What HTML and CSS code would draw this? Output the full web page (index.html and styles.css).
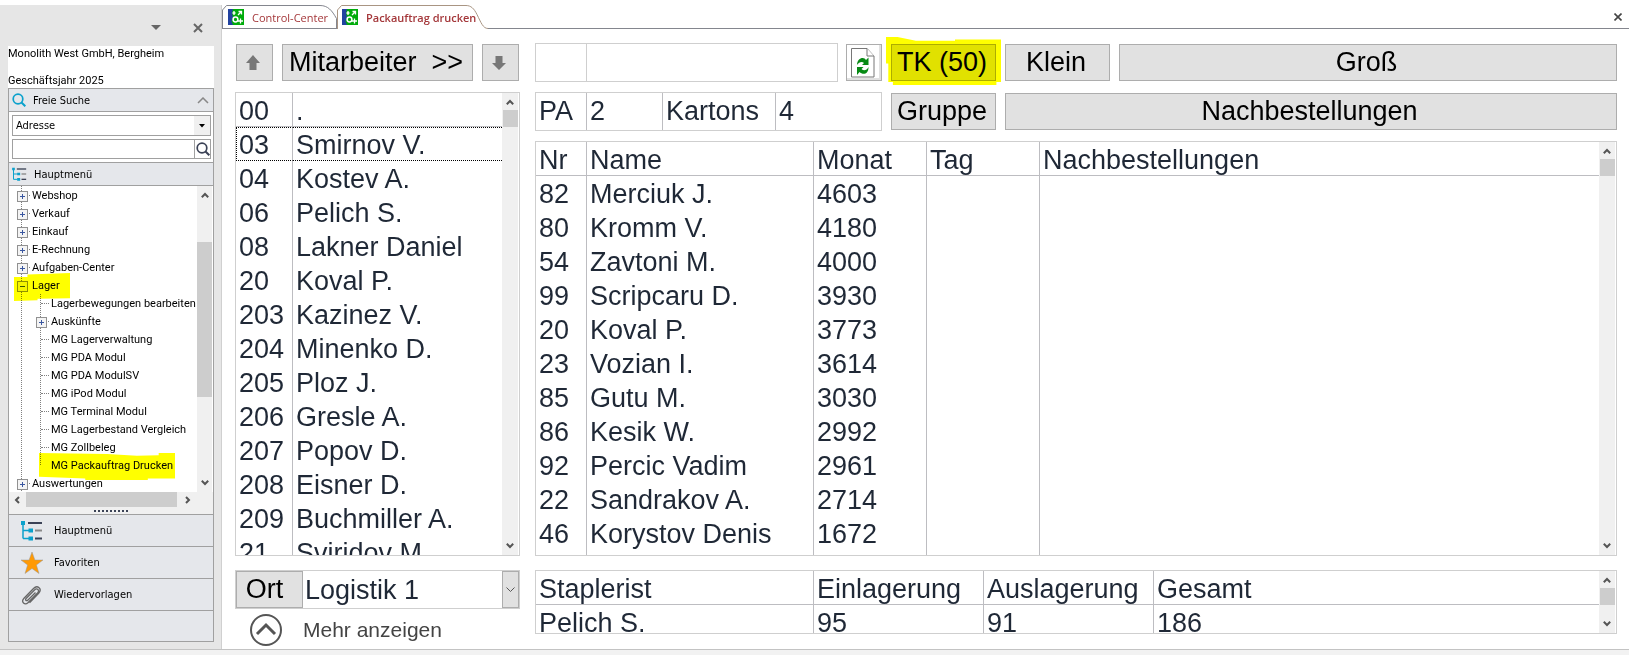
FILE: index.html
```
<!DOCTYPE html>
<html lang="de">
  <head>
    <meta charset="UTF-8" />
    <meta name="viewport" content="width=device-width, initial-scale=1.0" />
    <title>Packauftrag drucken</title>
    <link rel="stylesheet" href="styles.css">
  </head>
  <body>
    <!-- shared icons -->
    <svg class="sprite" width="0" height="0" aria-hidden="true">
      <symbol id="up" viewBox="0 0 8 6"><path d="M0.8 5.2L4 2l3.200 3.200" fill="none" stroke="#555" stroke-width="2" /></symbol>
      <symbol id="down" viewBox="0 0 8 6"><path d="M0.8 0.8L4 4l3.200-3.200" fill="none" stroke="#555" stroke-width="2" /></symbol>
      <symbol id="lens" viewBox="0 0 14 14"><circle cx="6" cy="6" r="4.800" fill="none" stroke="currentColor" stroke-width="1.700" /><path d="M9.500 9.500L13.300 13.300" stroke="currentColor" stroke-width="2" /></symbol>
      <symbol id="treeicon" viewBox="0 0 22 21">
        <path d="M2 3v15.500M2 10.500h6M2 18.500h6" fill="none" stroke="#0ba1cc" stroke-width="1.500" />
        <path d="M0 1h4v4H0zM7.500 8.500h4.500v4H7.500zM7.500 16.500h4.500v4H7.500z" fill="#0ba1cc" />
        <path d="M7 3h14" stroke="#3b4256" stroke-width="2" />
        <path d="M14 10.500h7" stroke="#888" stroke-width="2" />
        <path d="M14 18.500h7" stroke="#3b4256" stroke-width="2" />
      </symbol>
      <symbol id="app" viewBox="0 0 16 16">
        <path d="M0 0h16v16H0z" fill="#00ab0b" />
        <path d="M0 0h5l-1 4 1 4-1.500 4L5 16H0z" fill="#2142a0" />
        <circle cx="7.500" cy="10.500" r="2.400" fill="none" stroke="#fff" stroke-width="1.500" />
        <path d="M6 2v4M4.500 4h3M12.500 9.500v5M10 12h5M10 6l3-3M10.500 2.500h3v3" fill="none" stroke="#fff" stroke-width="1.300" />
      </symbol>
    </svg>

    <div class="app">
      <aside class="sidebar">
        <div class="dock-bar">
          <button class="plain" aria-label="Optionen"><svg width="10" height="5"><path d="M0 0h10L5 5z" fill="#666" /></svg></button>
          <button class="plain" aria-label="Schließen"><svg width="10" height="10"><path d="M1 1l8 8M9 1l-8 8" stroke="#666" stroke-width="2" /></svg></button>
        </div>
        <div class="company">
          <p>Monolith West GmbH, Bergheim</p>
          <p>Geschäftsjahr 2025</p>
        </div>

        <div class="panel">
          <h2 class="panel-title">
            <svg class="cyan" width="14" height="14"><use href="#lens" /></svg>
            <span>Freie Suche</span>
            <svg class="fold" width="12" height="7"><path d="M1 6l5-5 5 5" fill="none" stroke="#888" stroke-width="1.500" /></svg>
          </h2>
          <div class="search">
            <div class="search-type">
              <select aria-label="Suchbereich"><option>Adresse</option></select>
              <span class="search-arrow"><svg width="6" height="4"><path d="M0 0h6L3 3.500z" /></svg></span>
            </div>
            <div class="search-term">
              <input type="text" aria-label="Suchbegriff" />
              <button class="plain" aria-label="Suchen"><svg width="14" height="14"><use href="#lens" /></svg></button>
            </div>
          </div>
          <h2 class="panel-title menu-title">
            <svg width="15" height="14"><use href="#treeicon" /></svg>
            <span>Hauptmenü</span>
          </h2>

          <div class="tree-area">
            <ul class="tree">
              <li><a href="#" class="node">Webshop</a></li>
              <li><a href="#" class="node">Verkauf</a></li>
              <li><a href="#" class="node">Einkauf</a></li>
              <li><a href="#" class="node">E-Rechnung</a></li>
              <li><a href="#" class="node">Aufgaben-Center</a></li>
              <li><a href="#" class="node open mark mark-lager">Lager</a>
                <ul>
                  <li><a href="#">Lagerbewegungen bearbeiten</a></li>
                  <li><a href="#" class="node">Auskünfte</a></li>
                  <li><a href="#">MG Lagerverwaltung</a></li>
                  <li><a href="#">MG PDA Modul</a></li>
                  <li><a href="#">MG PDA ModulSV</a></li>
                  <li><a href="#">MG iPod Modul</a></li>
                  <li><a href="#">MG Terminal Modul</a></li>
                  <li><a href="#">MG Lagerbestand Vergleich</a></li>
                  <li><a href="#">MG Zollbeleg</a></li>
                  <li><a href="#" class="mark mark-druck">MG Packauftrag Drucken</a></li>
                </ul>
              </li>
              <li><a href="#" class="node">Auswertungen</a></li>
            </ul>
            <div class="scroll tree-scroll">
              <svg width="8" height="6"><use href="#up" /></svg>
              <i class="thumb"></i>
              <svg width="8" height="6"><use href="#down" /></svg>
            </div>
          </div>
          <div class="hscroll">
            <svg width="6" height="8"><path d="M5 1L2 4l3 3" fill="none" stroke="#555" stroke-width="2" /></svg>
            <i class="hthumb"></i>
            <svg width="6" height="8"><path d="M1 1l3 3-3 3" fill="none" stroke="#555" stroke-width="2" /></svg>
          </div>
          <div class="grip"></div>

          <nav class="shortcuts">
            <a href="#"><svg width="22" height="21"><use href="#treeicon" /></svg>Hauptmenü</a>
            <a href="#"><svg width="22" height="22" viewBox="0 0 22 22"><path d="M11 0l2.900 8H22l-6.600 5 2.600 8.500-7-5-7 5L6.600 13 0 8h8.100z" fill="#ff9a05" stroke="#999" stroke-width="0.500" /></svg>Favoriten</a>
            <a href="#"><svg width="22" height="22" viewBox="0 0 22 22"><path d="M15.500 7.500L8 15c-1.500 1.500-3.300 0-1.900-1.500L14.500 5c2.600-2.500 5.500.3 3 3l-9.300 9.500c-3.500 3.400-7.600-.6-4.200-4.200L13.500 3.500c4-4.200 9 .5 5.200 4.700L9.500 17.800" transform="translate(-1 1)" fill="none" stroke="#666" stroke-width="1.300" /></svg>Wiedervorlagen</a>
          </nav>
        </div>
      </aside>

      <main class="content">
        <div class="tabs">
          <button class="tab tab-center">
            <svg class="tab-shape" width="115" height="24"><path d="M0.500 24V5l4-4.500H98c8 0 12 5 16.500 13V24" fill="#fff" stroke="#84868e" /><path d="M0 23.500h115" stroke="#84868e" /></svg>
            <svg width="16" height="16"><use href="#app" /></svg>
            <span>Control-Center</span>
          </button>
          <button class="tab tab-active">
            <svg class="tab-shape" width="151" height="24"><path d="M0.500 24V5l4-4.500H129c5 0 8 3 11 9 4 8 6 14 11 14" fill="#fff" stroke="#a99583" /></svg>
            <svg width="16" height="16"><use href="#app" /></svg>
            <span>Packauftrag drucken</span>
          </button>
          <div class="tabs-rest">
            <button class="plain" aria-label="Tab schließen"><svg width="8" height="8"><path d="M0.500 0.500l7 7M7.500 0.500l-7 7" stroke="#444" stroke-width="1.600" /></svg></button>
          </div>
        </div>

        <div class="work">
          <section class="staff">
            <div class="toolbar">
              <button class="btn square" aria-label="Nach oben"><svg width="14" height="16"><path d="M7 0l7 8h-3.500v7h-7V8H0z" fill="#777" /></svg></button>
              <button class="btn grow">Mitarbeiter&nbsp; &gt;&gt;</button>
              <button class="btn square" aria-label="Nach unten"><svg width="14" height="16"><path d="M7 15l7-7h-3.500V1h-7v7H0z" fill="#777" /></svg></button>
            </div>
            <div class="box list">
              <div class="clip">
                <table>
                  <colgroup><col class="w-id"><col></colgroup>
                  <thead><tr><th>00</th><th>.</th></tr></thead>
                  <tbody>
                    <tr class="focused"><td>03</td><td>Smirnov V.</td></tr>
                    <tr><td>04</td><td>Kostev A.</td></tr>
                    <tr><td>06</td><td>Pelich S.</td></tr>
                    <tr><td>08</td><td>Lakner Daniel</td></tr>
                    <tr><td>20</td><td>Koval P.</td></tr>
                    <tr><td>203</td><td>Kazinez V.</td></tr>
                    <tr><td>204</td><td>Minenko D.</td></tr>
                    <tr><td>205</td><td>Ploz J.</td></tr>
                    <tr><td>206</td><td>Gresle A.</td></tr>
                    <tr><td>207</td><td>Popov D.</td></tr>
                    <tr><td>208</td><td>Eisner D.</td></tr>
                    <tr><td>209</td><td>Buchmiller A.</td></tr>
                    <tr><td>21</td><td>Sviridov M.</td></tr>
                  </tbody>
                </table>
              </div>
              <div class="scroll">
                <svg width="8" height="6"><use href="#up" /></svg>
                <i class="thumb"></i>
                <svg width="8" height="6"><use href="#down" /></svg>
              </div>
            </div>
            <div class="foot">
              <div class="place">
                <button class="btn ort" id="ort">Ort</button>
                <select aria-labelledby="ort"><option>Logistik 1</option></select>
                <span class="place-arrow"><svg width="9" height="6"><path d="M0.500 0.500l4 4 4-4" fill="none" stroke="#555" /></svg></span>
              </div>
              <button class="more">
                <svg width="34" height="34"><circle cx="17" cy="17" r="15" fill="none" stroke="#555" stroke-width="2" /><path d="M8 21l9-9 9 9" fill="none" stroke="#555" stroke-width="3" /></svg>
                <span>Mehr anzeigen</span>
              </button>
            </div>
          </section>

          <section class="orders">
            <div class="toolbar">
              <div class="toolbar-left">
                <div class="box scan">
                  <input type="text" class="scan-nr" aria-label="Nr" />
                  <input type="text" class="scan-name" aria-label="Name" />
                </div>
                <button class="btn refresh" aria-label="Aktualisieren">
                  <svg width="24" height="30" viewBox="0 0 24 30">
                    <path d="M0.500 0.500H16L23 8v21H0.500z" fill="#fff" stroke="#777" />
                    <path d="M16 0.500V8h7" fill="#fff" stroke="#777" />
                    <path d="M6 17c0-7 7-9 9-5l2.500-2.500V17H11l2-2c-2-2-5-1-7 2z" fill="#068a14" />
                    <path d="M17.500 19c0 8-6 8-9 5L6 27v-8h6.500l-2 2c2 2 5 2 7-2z" fill="#068a14" />
                  </svg>
                </button>
              </div>
              <button class="btn fixed mark mark-tk">TK (50)</button>
              <button class="btn fixed">Klein</button>
              <button class="btn grow">Groß</button>
            </div>
            <div class="toolbar">
              <div class="toolbar-left">
                <dl class="box totals">
                  <dt class="pa">PA</dt><dd class="pa-count">2</dd>
                  <dt class="kartons">Kartons</dt><dd>4</dd>
                </dl>
              </div>
              <button class="btn fixed">Gruppe</button>
              <button class="btn grow">Nachbestellungen</button>
            </div>
            <div class="box list">
              <div class="clip">
                <table class="tall">
                  <colgroup><col class="w-nr"><col class="w-name"><col class="w-num"><col class="w-num"><col></colgroup>
                  <thead><tr><th>Nr</th><th>Name</th><th>Monat</th><th>Tag</th><th>Nachbestellungen</th></tr></thead>
                  <tbody>
                    <tr><td>82</td><td>Merciuk J.</td><td>4603</td><td></td><td></td></tr>
                    <tr><td>80</td><td>Kromm V.</td><td>4180</td><td></td><td></td></tr>
                    <tr><td>54</td><td>Zavtoni M.</td><td>4000</td><td></td><td></td></tr>
                    <tr><td>99</td><td>Scripcaru D.</td><td>3930</td><td></td><td></td></tr>
                    <tr><td>20</td><td>Koval P.</td><td>3773</td><td></td><td></td></tr>
                    <tr><td>23</td><td>Vozian I.</td><td>3614</td><td></td><td></td></tr>
                    <tr><td>85</td><td>Gutu M.</td><td>3030</td><td></td><td></td></tr>
                    <tr><td>86</td><td>Kesik W.</td><td>2992</td><td></td><td></td></tr>
                    <tr><td>92</td><td>Percic Vadim</td><td>2961</td><td></td><td></td></tr>
                    <tr><td>22</td><td>Sandrakov A.</td><td>2714</td><td></td><td></td></tr>
                    <tr class="last"><td>46</td><td>Korystov Denis</td><td>1672</td><td></td><td></td></tr>
                  </tbody>
                </table>
              </div>
              <div class="scroll">
                <svg width="8" height="6"><use href="#up" /></svg>
                <i class="thumb"></i>
                <svg width="8" height="6"><use href="#down" /></svg>
              </div>
            </div>
            <div class="foot">
              <div class="box list drivers">
                <div class="clip">
                  <table>
                    <colgroup><col class="w-driver"><col class="w-store"><col class="w-store"><col></colgroup>
                    <thead><tr><th>Staplerist</th><th>Einlagerung</th><th>Auslagerung</th><th>Gesamt</th></tr></thead>
                    <tbody><tr><td>Pelich S.</td><td>95</td><td>91</td><td>186</td></tr></tbody>
                  </table>
                </div>
                <div class="scroll">
                  <svg width="8" height="6"><use href="#up" /></svg>
                  <i class="thumb"></i>
                  <svg width="8" height="6"><use href="#down" /></svg>
                </div>
              </div>
            </div>
          </section>
        </div>
      </main>
    </div>
    <footer class="status"></footer>
  </body>
</html>
```
FILE: styles.css
```
* {
  margin: 0;
  padding: 0;
  box-sizing: border-box;
}
body {
  display: flex;
  flex-direction: column;
  height: 100vh;
  padding-top: 5px;
  background: #fff;
  color: #1f2836;
  font-family: "Liberation Sans", Arial, sans-serif;
  font-size: 27px;
  overflow: hidden;
}
button,
input,
select {
  font: inherit;
  color: inherit;
  border: none;
  background: none;
  border-radius: 0;
}
input:focus {
  outline: none;
}
select {
  appearance: none;
}
svg {
  display: block;
  flex: none;
}
.sprite {
  position: absolute;
}
.plain {
  display: flex;
  justify-content: center;
  align-items: center;
}
.app {
  flex: 1;
  min-height: 0;
  display: flex;
}
.status {
  height: 6px;
  background: #f2f2f2;
  border-top: 1px solid #c3c3c3;
}

/* sidebar */
.sidebar {
  width: 222px;
  flex: none;
  display: flex;
  flex-direction: column;
  padding: 0 7px 7px 8px;
  background: #e6e6e6;
  border-right: 1px solid #d0d0d0;
  color: #000;
  font-family: Tahoma, "DejaVu Sans Condensed", sans-serif;
  font-size: 11px;
}
.dock-bar {
  height: 41px;
  display: flex;
  justify-content: flex-end;
  align-items: center;
  gap: 32px;
  padding: 4px 11px 0 0;
}
.company {
  height: 42px;
  display: flex;
  flex-direction: column;
  justify-content: space-between;
  background: #fff;
  font-family: Tahoma, Roboto, sans-serif;
  line-height: 15px;
  white-space: nowrap;
}
.panel {
  flex: 1;
  display: flex;
  flex-direction: column;
  border: 1px solid #a0a0a0;
  background: #e5e7eb;
}
.panel-title {
  height: 23px;
  display: flex;
  align-items: center;
  gap: 7px;
  padding: 0 4px 0 3px;
  font-size: 11px;
  font-weight: normal;
  border-bottom: 1px solid #a0a0a0;
}
.menu-title {
  height: 24px;
  border-top: 1px solid #a0a0a0;
}
.cyan {
  color: #0ba1cc;
}
.fold {
  margin-left: auto;
}
.search {
  display: flex;
  flex-direction: column;
  gap: 3px;
  padding: 3px 2px 3px 3px;
  background: #fff;
}
.search-type,
.search-term {
  display: flex;
  height: 21px;
  border: 1px solid #a0a0a0;
  background: #fff;
}
.search-term {
  height: 20px;
}
.search-type select {
  flex: 1;
  padding-left: 3px;
}
.search-arrow {
  width: 16px;
  display: flex;
  justify-content: center;
  align-items: center;
  background: #f0f0f0;
}
.search-term input {
  flex: 1;
  min-width: 0;
}
.search-term button {
  width: 16px;
  border-left: 1px solid #a0a0a0;
  color: #3b4256;
}
.tree-area {
  flex: 1;
  min-height: 0;
  display: flex;
  padding-right: 1px;
  background: #fff;
}
.tree {
  flex: 1;
  min-width: 0;
  padding-left: 23px;
  list-style: none;
  font-family: Tahoma, Roboto, sans-serif;
  white-space: nowrap;
  background: repeating-linear-gradient(#808080 0 1px, transparent 1px 2px) 12px 0 / 1px 100% no-repeat;
}
.tree ul {
  padding-left: 19px;
  list-style: none;
  background: repeating-linear-gradient(#808080 0 1px, transparent 1px 2px) 8px 0 / 1px 171px no-repeat;
}
.tree a {
  display: block;
  height: 18px;
  line-height: 19px;
  color: #000;
  text-decoration: none;
  position: relative;
}
.tree a::before {
  content: "";
  position: absolute;
  left: -10px;
  top: 9px;
  width: 8px;
  border-top: 1px dotted #808080;
}
.tree .node::after {
  content: "";
  position: absolute;
  left: -15px;
  top: 5px;
  width: 9px;
  height: 9px;
  border: 1px solid #919191;
  background: linear-gradient(#3a57a0, #3a57a0) center / 5px 1px no-repeat,
    linear-gradient(#3a57a0, #3a57a0) center / 1px 5px no-repeat, #f4f4f4;
}
.tree .node.open::after {
  background: linear-gradient(#3a57a0, #3a57a0) center / 5px 1px no-repeat, #f4f4f4;
}

/* text marker strokes */
.mark {
  position: relative;
}
.tree .mark-lager::before {
  left: -18px;
  top: -3px;
  width: 56px;
  height: 28px;
  border: none;
  z-index: 1;
  background: #ff0;
  mix-blend-mode: multiply;
  clip-path: polygon(0 14%, 24% 14%, 24% 5%, 100% 0, 100% 90%, 42% 92%, 42% 97%, 0 100%);
}
.tree .mark-druck::before {
  left: -12px;
  top: -3px;
  width: 136px;
  height: 27px;
  border: none;
  background: #ff0;
  mix-blend-mode: multiply;
  clip-path: polygon(0 0, 50% 4%, 72% 10%, 88% 8%, 88% 0, 100% 0, 100% 94%, 80% 94%, 80% 100%, 34% 100%, 34% 94%, 0 88%);
}
.mark-tk::before {
  content: "";
  position: absolute;
  left: -6px;
  top: -8px;
  width: 115px;
  height: 48px;
  background: #ff0;
  mix-blend-mode: multiply;
  clip-path: polygon(0 0, 10% 0, 26% 8%, 60% 8%, 60% 5%, 100% 5%, 100% 94%, 96% 94%, 96% 100%, 6% 100%, 6% 94%, 2% 94%, 2% 55%, 0 55%);
}

/* scrollbars */
.scroll {
  width: 16px;
  flex: none;
  display: flex;
  flex-direction: column;
  align-items: center;
  justify-content: space-between;
  padding: 6px 0;
  background: #f0f0f0;
}
.thumb {
  width: 15px;
  height: 17px;
  margin: 5px 0 auto;
  background: #cdcdcd;
}
.tree-scroll {
  width: 15px;
}
.tree-scroll .thumb {
  height: 155px;
  margin-top: 44px;
}
.hscroll {
  height: 15px;
  display: flex;
  align-items: center;
  padding-left: 5px;
  background: #f0f0f0;
}
.hthumb {
  width: 151px;
  height: 15px;
  margin: 0 8px 0 6px;
  background: #cdcdcd;
}
.grip {
  height: 7px;
  background: repeating-linear-gradient(to right, #3b4256 0 2px, transparent 2px 4px) center 3px / 34px 2px no-repeat #f0f0f0;
}
.shortcuts {
  height: 127px;
}
.shortcuts a {
  height: 32px;
  display: flex;
  align-items: center;
  gap: 11px;
  padding-left: 12px;
  border-top: 1px solid #a0a0a0;
  color: #000;
  text-decoration: none;
}
.shortcuts a:last-child {
  height: 33px;
  border-bottom: 1px solid #a0a0a0;
}

/* tabs */
.content {
  flex: 1;
  min-width: 0;
  display: flex;
  flex-direction: column;
}
.tabs {
  height: 24px;
  display: flex;
}
.tab {
  position: relative;
  display: flex;
  align-items: center;
  gap: 8px;
  padding-left: 6px;
  font-family: "Segoe UI", "Open Sans", sans-serif;
  font-size: 11px;
  color: #a4373a;
  white-space: nowrap;
}
.tab > * {
  position: relative;
}
.tab .tab-shape {
  position: absolute;
  left: 0;
  top: 0;
}
.tab-center {
  width: 115px;
}
.tab-active {
  width: 151px;
  padding-left: 5px;
  font-weight: 600;
}
.tabs-rest {
  flex: 1;
  display: flex;
  justify-content: flex-end;
  padding-right: 7px;
  border-bottom: 1px solid #84868e;
}

/* work area */
.work {
  flex: 1;
  min-height: 0;
  display: grid;
  grid-template-columns: 285px 1fr;
  gap: 15px;
  padding: 14px 12px 0 13px;
}
.staff,
.orders {
  min-width: 0;
  min-height: 0;
  display: flex;
  flex-direction: column;
  gap: 10px;
}
.toolbar {
  height: 39px;
  flex: none;
  display: flex;
  align-items: center;
  gap: 9px;
}
.staff .toolbar {
  padding: 0 1px;
}
.toolbar-left {
  width: 347px;
  display: flex;
  align-items: center;
  justify-content: space-between;
}
.btn {
  height: 37px;
  display: flex;
  justify-content: center;
  align-items: center;
  padding-right: 3px;
  background: #e1e1e1;
  border: 1px solid #adadad;
  color: #000;
  white-space: nowrap;
}
.square {
  width: 37px;
}
.grow {
  flex: 1;
}
.fixed {
  width: 105px;
}
.refresh {
  width: 36px;
  background: #fff;
  box-shadow: inset -2px -2px #e1e1e1;
}
.box {
  border: 1px solid #cfcfcf;
  background: #fff;
}
.scan {
  width: 303px;
  height: 39px;
  display: flex;
}
.scan-nr {
  width: 51px;
  border-right: 1px solid #cfcfcf;
}
.scan-name {
  flex: 1;
  min-width: 0;
}
.totals {
  width: 100%;
  height: 39px;
  display: flex;
  line-height: 36px;
}
.totals > * {
  padding-left: 3px;
  border-right: 1px solid #bdbdc1;
}
.totals > :last-child {
  border-right: none;
}
.pa {
  width: 51px;
}
.pa-count {
  width: 76px;
}
.kartons {
  width: 113px;
}
.list {
  flex: 1;
  min-height: 0;
  display: flex;
  padding-right: 1px;
}
.clip {
  flex: 1;
  min-width: 0;
  overflow: hidden;
}
table {
  width: 100%;
  table-layout: fixed;
  border-collapse: separate;
  border-spacing: 0;
}
.tall {
  height: 100%;
}
th,
td {
  height: 34px;
  padding: 3px 0 0 3px;
  border-right: 1px solid #bdbdc1;
  line-height: 30px;
  font-weight: normal;
  text-align: left;
  vertical-align: top;
  white-space: nowrap;
}
th {
  border-bottom: 1px solid #bdbdc1;
}
th:last-child,
td:last-child {
  border-right: none;
}
.focused td {
  padding-top: 2px;
  border-top: 1px dotted #000;
  border-bottom: 1px dotted #000;
}
.focused td:first-child {
  padding-left: 2px;
  border-left: 1px dotted #000;
}
.last td {
  height: auto;
}
.w-id {
  width: 57px;
}
.w-nr {
  width: 51px;
}
.w-name {
  width: 227px;
}
.w-num {
  width: 113px;
}
.w-driver {
  width: 278px;
}
.w-store {
  width: 170px;
}
.foot {
  height: 79px;
  flex: none;
  margin-top: 4px;
}
.drivers {
  height: 64px;
}
.place {
  display: flex;
  height: 39px;
  border: 1px solid #cfcfcf;
}
.ort {
  width: 67px;
  height: 37px;
  padding-right: 10px;
}
.place select {
  flex: 1;
  min-width: 0;
  padding-left: 2px;
}
.place-arrow {
  width: 17px;
  display: flex;
  justify-content: center;
  align-items: center;
  background: #e1e1e1;
  border: 1px solid #adadad;
}
.more {
  display: flex;
  align-items: center;
  gap: 20px;
  padding: 4px 0 0 14px;
  font-size: 21px;
  color: #444;
}
```
